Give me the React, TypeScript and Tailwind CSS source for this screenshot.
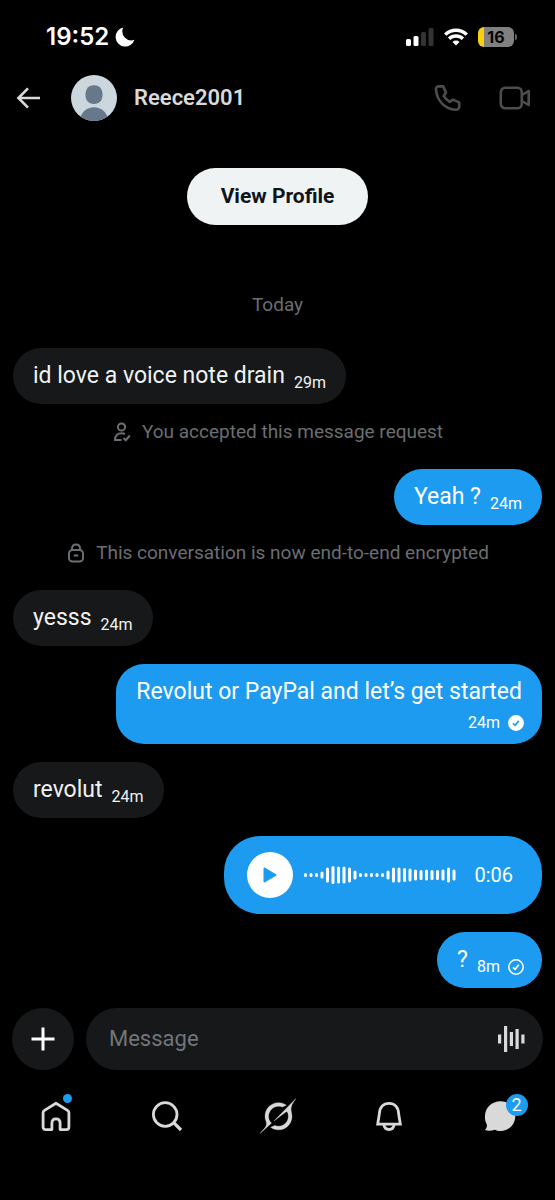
import type { ReactNode } from "react";
import clsx from "clsx";

type Status = "sent" | "read";

const WAVE = [4, 4, 4, 7, 15, 18, 17, 17, 15, 9, 4, 4, 4, 4, 4, 9, 15, 15, 14, 13, 11, 10, 11, 10, 10, 11, 15, 11];

function StatusBar() {
  return (
    <div className="flex h-[74px] items-center justify-between pr-[38px] pl-[46px] text-white">
      <div className="flex items-center gap-[6px]">
        <span className="font-['Inter',sans-serif] text-2xl leading-7 font-semibold">19:52</span>
        <svg className="size-5" viewBox="0 0 20 20" fill="currentColor" aria-hidden="true">
          <path d="M8.2.6A9.6 9.6 0 1 0 19.4 12.8 9 9 0 0 1 8.2.6Z" />
        </svg>
      </div>
      <div className="flex items-center gap-[10px]">
        <svg className="h-[18px] w-7" viewBox="0 0 28 18" aria-hidden="true">
          <rect x="0" y="11" width="5" height="7" rx="1.5" fill="#fff" />
          <rect x="7.5" y="8" width="5" height="10" rx="1.5" fill="#fff" />
          <rect x="15" y="4" width="5" height="14" rx="1.5" fill="#333" />
          <rect x="22.5" y="0" width="5" height="18" rx="1.5" fill="#333" />
        </svg>
        <svg className="h-[18px] w-6" viewBox="0 0 24 18" fill="none" stroke="#fff" strokeWidth="3.4" aria-hidden="true">
          <path d="M1.2 6.6A15.4 15.4 0 0 1 22.8 6.6" />
          <path d="M5.1 10.8A9.9 9.9 0 0 1 18.9 10.8" />
          <path d="M12 17.6 8.5 14a5 5 0 0 1 7 0Z" fill="#fff" stroke="none" />
        </svg>
        <div className="flex items-center gap-px">
          <div className="flex h-5 w-9 items-center justify-center rounded-md bg-[linear-gradient(to_right,#f8d010_0_16%,#808080_16%)]">
            <span className="font-['Inter',sans-serif] text-base leading-5 font-bold text-black">16</span>
          </div>
          <div className="h-[6px] w-[2px] rounded-r-sm bg-[#666]" />
        </div>
      </div>
    </div>
  );
}

function Header() {
  return (
    <header className="flex h-12 items-center pr-6 pl-4">
      <button type="button" aria-label="Back">
        <svg className="size-6" viewBox="0 0 24 24" fill="none" stroke="#d9d9d9" strokeWidth="2.6" aria-hidden="true">
          <path d="M24 12H2.5M12 2.4 2.4 12l9.6 9.6" />
        </svg>
      </button>
      <svg className="ml-[31px] size-[46px] rounded-full" viewBox="0 0 46 46" aria-hidden="true">
        <rect width="46" height="46" fill="#ccd6dd" />
        <path d="M14.5 19.5c0-6 3.5-9.2 8.5-9.2s8.5 3.2 8.5 9.2-3 9.5-8.5 9.5-8.5-3.5-8.5-9.5Z" fill="#66788a" />
        <path d="M8.5 46C10 37 15.5 32.3 23 32.3S36 37 37.5 46Z" fill="#66788a" />
      </svg>
      <h1 className="ml-[17px] flex-1 text-[22px] leading-7 font-semibold text-[#d9d9d9]">Reece2001</h1>
      <button type="button" aria-label="Voice call">
        <svg className="size-7" viewBox="0 0 28 28" fill="none" stroke="#4d4d4d" strokeWidth="2.6" strokeLinejoin="round" aria-hidden="true">
          <path d="M5.8 2.4h4.4l2.8 6.2-2.3 3.300c1.500 2.700 3.300 4.500 6 6l3.200-2.300 6.300 2.800v4c0 2.100-1.400 3.500-3.500 3.400C12 25 3.800 16.800 3 5.500 2.900 3.600 4 2.400 5.800 2.400Z" />
        </svg>
      </button>
      <button type="button" aria-label="Video call" className="ml-[38px]">
        <svg className="h-6 w-8" viewBox="0 0 32 24" fill="none" stroke="#4d4d4d" strokeWidth="2.6" strokeLinejoin="round" aria-hidden="true">
          <rect x="1.8" y="1.7" width="21" height="20.600" rx="4.500" />
          <path d="m23 9 6.700-4v14L23 15" />
        </svg>
      </button>
    </header>
  );
}

function ReceiptIcon({ status }: { status: Status }) {
  const read = status === "read";
  return (
    <svg className="size-4" viewBox="0 0 16 16" fill="none" role="img" aria-label={read ? "Read" : "Sent"}>
      <circle cx="8" cy="8" r="7.200" fill={read ? "#fff" : "none"} stroke="#fff" strokeWidth="1.500" />
      <path d="m5 8.300 2.100 2 3.700-4.500" stroke={read ? "#1d9bf0" : "#fff"} strokeWidth="1.700" />
    </svg>
  );
}

interface BubbleProps {
  children: ReactNode;
  time: string;
  own?: boolean;
  stacked?: boolean;
  status?: Status;
}

function Bubble({ children, time, own, stacked, status }: BubbleProps) {
  return (
    <div
      className={clsx(
        "flex rounded-[28px] px-5 pt-[14px]",
        own ? "self-end bg-[#1d9bf0] text-white" : "self-start bg-[#16181a] text-[#f0f2f3]",
        stacked ? "min-h-20 flex-col gap-[7px] pb-[11px]" : "min-h-14 gap-[9px] pb-[11px]"
      )}
    >
      <p className="text-[23px] leading-7">{children}</p>
      <div className={clsx("flex items-center gap-2 self-end text-base leading-5", status && "-mr-0.5")}>
        <span>{time}</span>
        {status && <ReceiptIcon status={status} />}
      </div>
    </div>
  );
}

function Notice({ icon, children }: { icon: ReactNode; children: ReactNode }) {
  return (
    <div className="flex items-center justify-center gap-[10px] pb-[9px] text-[19px] leading-5 text-[#6b6e72]">
      {icon}
      <span>{children}</span>
    </div>
  );
}

function VoiceNote() {
  return (
    <div className="flex h-[78px] items-center self-end rounded-[36px] bg-[#1d9bf0] pr-[29px] pl-[23px] text-white">
      <button type="button" aria-label="Play voice note" className="flex size-[46px] items-center justify-center rounded-full bg-white">
        <svg className="h-4 w-[14px]" viewBox="0 0 14 16" fill="#1d9bf0" stroke="#1d9bf0" strokeWidth="2" strokeLinejoin="round" aria-hidden="true">
          <path d="M1.500 1.500 12.500 8l-11 6.500Z" />
        </svg>
      </button>
      <svg className="ml-[11px] h-5 w-[152px]" viewBox="0 0 152 20" fill="#fff" aria-hidden="true">
        {WAVE.map((h, i) => (
          <rect key={i} x={i * 5.5} y={10 - h / 2} width="3" height={h} rx="1.500" />
        ))}
      </svg>
      <span className="ml-[18px] text-xl leading-6">0:06</span>
    </div>
  );
}

function Composer() {
  return (
    <form className="mt-5 flex items-center gap-3 px-3" onSubmit={(e) => e.preventDefault()}>
      <button type="button" aria-label="Add attachment" className="flex size-[62px] shrink-0 items-center justify-center rounded-full bg-[#16181a]">
        <svg className="size-6" viewBox="0 0 24 24" stroke="#fff" strokeWidth="3" aria-hidden="true">
          <path d="M12 .5v23M.5 12h23" />
        </svg>
      </button>
      <div className="flex h-[62px] min-w-0 flex-1 items-center rounded-full bg-[#16181a] pr-[18px] pl-[23px]">
        <input
          type="text"
          aria-label="Message"
          placeholder="Message"
          className="min-w-0 flex-1 bg-transparent text-[22px] leading-7 text-white outline-none placeholder:text-[#727579]"
        />
        <button type="button" aria-label="Record voice note">
          <svg className="h-[26px] w-[27px]" viewBox="0 0 27 26" fill="#d9d9d9" aria-hidden="true">
            <rect x="0" y="8.500" width="3.200" height="9" />
            <rect x="6" y="0" width="3.200" height="26" />
            <rect x="11.800" y="6" width="3.200" height="14" />
            <rect x="17.500" y="3" width="3.200" height="20" />
            <rect x="23.300" y="8.500" width="3.200" height="9" />
          </svg>
        </button>
      </div>
    </form>
  );
}

function NavItem({ label, children }: { label: string; children: ReactNode }) {
  return (
    <a href="#" aria-label={label} className="flex flex-1 justify-center text-[#d9d9d9]">
      <span className="relative">{children}</span>
    </a>
  );
}

function BottomNav() {
  return (
    <nav className="mt-[28px] flex pb-[66px]">
      <NavItem label="Home">
        <svg className="size-9" viewBox="0 0 36 36" fill="none" stroke="currentColor" strokeWidth="2.8" strokeLinejoin="round" aria-hidden="true">
          <path d="M18 5.200 29.500 12.400c.9.600 1.400 1.300 1.400 2.400v14.200c0 1.600-1 2.600-2.600 2.600h-6.200V25.300c0-2.700-1.500-4.400-4.100-4.400s-4.100 1.700-4.100 4.400v6.300H7.700c-1.600 0-2.600-1-2.600-2.600V14.800c0-1.100.5-1.800 1.400-2.400Z" />
        </svg>
        <span className="absolute top-[-4px] right-[2px] size-[9px] rounded-full bg-[#1d9bf0]" />
      </NavItem>
      <NavItem label="Search">
        <svg className="size-9" viewBox="0 0 36 36" fill="none" stroke="currentColor" strokeWidth="2.8" aria-hidden="true">
          <circle cx="16.200" cy="16.500" r="11.800" />
          <path d="m24.700 24.700 7.300 7.300" strokeWidth="3.200" />
        </svg>
      </NavItem>
      <NavItem label="Grok">
        <svg className="size-9" viewBox="0 -.5 33 33" fill="currentColor" stroke="currentColor" strokeWidth=".3" aria-hidden="true">
          <path d="M12.745 20.540l10.970-8.190c.539-.4 1.307-.244 1.564.38 1.349 3.288.746 7.241-1.938 9.955-2.683 2.714-6.417 3.310-9.830 1.954l-3.728 1.745c5.347 3.697 11.840 2.782 15.898-1.324 3.219-3.255 4.216-7.692 3.284-11.693l.008.009c-1.351-5.878.332-8.227 3.782-13.031L33 0l-4.540 4.590v-.014L12.743 20.544m-2.263 1.987c-3.837-3.707-3.175-9.446.1-12.755 2.420-2.449 6.388-3.448 9.852-1.979l3.720-1.737c-.67-.49-1.530-1.017-2.515-1.387-4.455-1.854-9.789-.931-13.410 2.728-3.483 3.523-4.579 8.940-2.697 13.561 1.405 3.454-.899 5.898-3.220 8.364C1.490 30.200.666 31.074 0 32l10.478-9.466" />
        </svg>
      </NavItem>
      <NavItem label="Notifications">
        <svg className="size-9" viewBox="0 0 36 36" fill="none" stroke="currentColor" strokeWidth="2.8" aria-hidden="true">
          <path d="M8.400 15.500C8.800 9 12.500 5.400 18 5.400S27.200 9 27.600 15.500l1.700 10.600h-22.600Z" />
          <path d="M12.800 26.500c.5 3.200 2.400 5 5.200 5s4.700-1.800 5.200-5" />
        </svg>
      </NavItem>
      <NavItem label="Messages">
        <svg className="size-9" viewBox="0 0 36 36" fill="currentColor" aria-hidden="true">
          <path d="M18.500 3.300c8.500 0 14.800 6.400 14.800 14.700s-6.300 15-14.800 15c-2.200 0-4-.5-5.700-1.300-2.900 1-6.400 1.300-9.900.4 1.700-1.900 2.300-3.600 1.900-5.500A14 14 0 0 1 3 18C3 9.700 9.800 3.300 18.500 3.300Z" />
        </svg>
        <span className="absolute -top-1 -right-[10px] flex size-[22px] items-center justify-center rounded-full bg-[#1d9bf0] text-lg leading-5 text-white">
          2
        </span>
      </NavItem>
    </nav>
  );
}

export default function App() {
  return (
    <div className="flex min-h-screen flex-col bg-black font-['Roboto',sans-serif]">
      <StatusBar />
      <Header />
      <main className="flex flex-1 flex-col px-[13px]">
        <button type="button" className="mt-[46px] h-[57px] self-center rounded-full bg-[#eff3f4] px-[34px] text-[21px] font-bold text-[#0f1419]">
          View Profile
        </button>
        <p className="mt-[70px] text-center text-[19px] leading-5 text-[#6b6e72]">Today</p>
        <div className="mt-[33px] flex flex-col gap-[18px]">
          <Bubble time="29m">id love a voice note drain</Bubble>
          <Notice
            icon={
              <svg className="size-5" viewBox="0 0 20 20" fill="none" stroke="currentColor" strokeWidth="2" aria-hidden="true">
                <circle cx="9.500" cy="5" r="3.600" />
                <path d="M9.500 18H3c0-4.300 2.600-6.700 6.500-6.700 1.300 0 2.400.2 3.400.8M11.500 16l2.300 2.200 4-4.700" />
              </svg>
            }
          >
            You accepted this message request
          </Notice>
          <Bubble own time="24m">Yeah ?</Bubble>
          <Notice
            icon={
              <svg className="size-5" viewBox="0 0 20 20" fill="none" stroke="currentColor" strokeWidth="2" aria-hidden="true">
                <rect x="3" y="7" width="14" height="11.600" rx="3.500" />
                <path d="M6 7V5.500C6 3 7.600 1.400 10 1.400S14 3 14 5.500V7M7.700 12.500h4.600" />
              </svg>
            }
          >
            This conversation is now end-to-end encrypted
          </Notice>
          <Bubble time="24m">yesss</Bubble>
          <Bubble own stacked time="24m" status="read">
            Revolut or PayPal and let’s get started
          </Bubble>
          <Bubble time="24m">revolut</Bubble>
          <VoiceNote />
          <Bubble own time="8m" status="sent">?</Bubble>
        </div>
      </main>
      <Composer />
      <BottomNav />
    </div>
  );
}
